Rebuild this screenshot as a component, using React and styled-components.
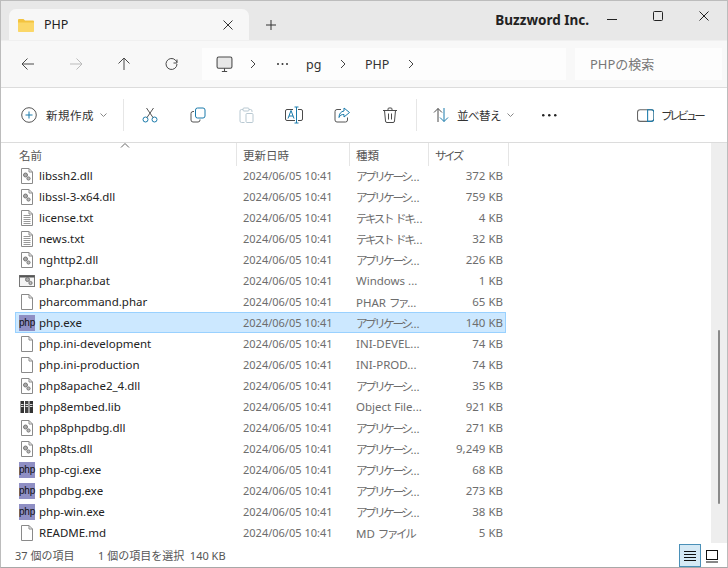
import React from 'react';
import styled, { createGlobalStyle } from 'styled-components';

const files = [
  ['libssh2.dll', 'dll', 'アプリケーシ...', '372 KB'],
  ['libssl-3-x64.dll', 'dll', 'アプリケーシ...', '759 KB'],
  ['license.txt', 'txt', 'テキスト ドキ...', '4 KB'],
  ['news.txt', 'txt', 'テキスト ドキ...', '32 KB'],
  ['nghttp2.dll', 'dll', 'アプリケーシ...', '226 KB'],
  ['phar.phar.bat', 'bat', 'Windows ...', '1 KB'],
  ['pharcommand.phar', 'blank', 'PHAR ファ...', '65 KB'],
  ['php.exe', 'php', 'アプリケーシ...', '140 KB', true],
  ['php.ini-development', 'blank', 'INI-DEVEL...', '74 KB'],
  ['php.ini-production', 'blank', 'INI-PROD...', '74 KB'],
  ['php8apache2_4.dll', 'dll', 'アプリケーシ...', '35 KB'],
  ['php8embed.lib', 'lib', 'Object File...', '921 KB'],
  ['php8phpdbg.dll', 'dll', 'アプリケーシ...', '271 KB'],
  ['php8ts.dll', 'dll', 'アプリケーシ...', '9,249 KB'],
  ['php-cgi.exe', 'php', 'アプリケーシ...', '68 KB'],
  ['phpdbg.exe', 'php', 'アプリケーシ...', '273 KB'],
  ['php-win.exe', 'php', 'アプリケーシ...', '38 KB'],
  ['README.md', 'blank', 'MD ファイル', '5 KB'],
];

// the reference font sets katakana much narrower than latin
const withKana = (text) =>
  text.split(/([\u30a0-\u30ff]+)/).map((part, i) =>
    i % 2 ? <Kana key={i}>{part}</Kana> : part
  );

const Svg = ({ size = 16, children, ...rest }) => (
  <svg width={size} height={size} viewBox="0 0 16 16" fill="none" stroke="#4a4a4a" strokeWidth="1" {...rest}>
    {children}
  </svg>
);

const Page = ({ children }) => (
  <Svg stroke="#8a8a8a">
    <path d="M2.5 .5h7.5l3.5 3.5v11.5h-11z" fill="#fff" />
    <path d="M10 .5v3.5h3.5" />
    {children}
  </Svg>
);

const Gears = () => (
  <g>
    <circle cx="6.5" cy="7" r="2" fill="#aaa" stroke="#777" />
    <circle cx="9.5" cy="10.5" r="1.6" fill="#bbb" stroke="#777" />
  </g>
);

const ThreeDots = ({ width, r, step, fill }) => (
  <svg width={width} height={r * 2} viewBox={`0 0 ${width} ${r * 2}`} fill={fill}>
    <circle cx={r} cy={r} r={r} />
    <circle cx={r + step} cy={r} r={r} />
    <circle cx={r + step * 2} cy={r} r={r} />
  </svg>
);

const FileIcon = ({ kind }) => {
  if (kind === 'php') return <PhpBadge>php</PhpBadge>;
  if (kind === 'dll') return <Page><Gears /></Page>;
  if (kind === 'blank') return <Page />;
  if (kind === 'txt') {
    return (
      <Page>
        <path d="M4.5 5.5h7M4.5 7.5h7M4.5 9.5h7M4.5 11.5h7M4.5 13.5h7" stroke="#999" />
      </Page>
    );
  }
  if (kind === 'bat') {
    return (
      <Svg stroke="#777">
        <rect x=".5" y="2.5" width="15" height="11" fill="#f4f4f4" />
        <path d="M.5 3.5h15" stroke="#555" strokeWidth="2" />
        <g transform="translate(2 -.5)"><Gears /></g>
      </Svg>
    );
  }
  return (
    <Svg stroke="none">
      <rect x="1.500" y="2" width="3.500" height="12" fill="#333" />
      <rect x="6" y="2" width="3.500" height="12" fill="#444" />
      <rect x="10.500" y="2" width="3.500" height="12" fill="#333" />
      <path d="M2 5.500h2.500M6.500 5.500h2.500M11 5.500h2.500M2 7.500h2.500M6.500 7.500h2.500M11 7.500h2.500" stroke="#ddd" />
    </Svg>
  );
};

const App = () => (
  <Window>
    <GlobalStyle />
    <TitleBar>
      <Tab>
        <svg width="16" height="14" viewBox="0 0 16 14">
          <path d="M0 2a1 1 0 0 1 1-1h4.500l1.500 1.500h8a1 1 0 0 1 1 1v9a1 1 0 0 1-1 1h-14a1 1 0 0 1-1-1z" fill="#f3c33f" />
          <path d="M0 4.500h16v8.500a1 1 0 0 1-1 1h-14a1 1 0 0 1-1-1z" fill="#fbd768" />
        </svg>
        <TabTitle>PHP</TabTitle>
        <Svg size={12} viewBox="0 0 12 12" stroke="#333"><path d="M1.500 1.500l9 9M10.500 1.500l-9 9" /></Svg>
      </Tab>
      <NewTab>
        <Svg size={12} viewBox="0 0 12 12" stroke="#333"><path d="M6 1v10M1 6h10" /></Svg>
      </NewTab>
      <Brand>Buzzword Inc.</Brand>
      <Controls>
        <ControlBox><Svg size={12} viewBox="0 0 12 12" stroke="#222"><path d="M1 9.500h10" /></Svg></ControlBox>
        <ControlBox><Svg size={12} viewBox="0 0 12 12" stroke="#222"><rect x="1.500" y="1.500" width="9" height="9" rx="1" /></Svg></ControlBox>
        <ControlBox><Svg size={12} viewBox="0 0 12 12" stroke="#222"><path d="M1.500 1.500l9 9M10.500 1.500l-9 9" /></Svg></ControlBox>
      </Controls>
    </TitleBar>

    <AddressRow>
      <NavButton><Svg><path d="M14 8H2M7.500 2.500L2 8l5.500 5.500" /></Svg></NavButton>
      <NavButton><Svg stroke="#bbb"><path d="M2 8h12M8.500 2.500L14 8l-5.500 5.500" /></Svg></NavButton>
      <NavButton><Svg><path d="M8 14V2M2.500 7.500L8 2l5.500 5.500" /></Svg></NavButton>
      <NavButton><Svg><path d="M13 3.500V7H9.500" /><path d="M13 8a5.500 5.500 0 1 1-1.600-3.900L13 6" /></Svg></NavButton>
      <AddressBox>
        <Crumb $w={44} $center>
          <Svg size={17}>
            <rect x="1" y="1" width="14" height="10.500" rx="1.500" fill="#e8e8e8" />
            <path d="M5.500 14.500h5M8 11.500v3" />
          </Svg>
        </Crumb>
        <Chevron />
        <Crumb $w={44} $center><ThreeDots width={11} r={1} step={4.500} fill="#333" /></Crumb>
        <Crumb $w={32} $pad={2}>pg</Crumb>
        <Chevron />
        <Crumb $w={54} $pad={15}>PHP</Crumb>
        <Chevron />
      </AddressBox>
      <SearchBox>PHPの検索</SearchBox>
    </AddressRow>

    <Toolbar>
      <ToolLabelButton $w={100}>
        <Svg>
          <circle cx="8" cy="8" r="7.300" stroke="#555" />
          <path d="M8 4.500v7M4.500 8h7" stroke="#1b7bab" />
        </Svg>
        <ToolLabel $spacing={0.5}>新規作成</ToolLabel>
        <SmallCaret />
      </ToolLabelButton>
      <ToolSeparator />
      <ToolButton>
        <Svg stroke="#1b7bab">
          <circle cx="3.500" cy="12.500" r="2.500" />
          <circle cx="12.500" cy="12.500" r="2.500" />
          <path d="M5 10.500L11.500 1M11 10.500L4.500 1" stroke="#555" />
        </Svg>
      </ToolButton>
      <ToolButton>
        <Svg stroke="#1b7bab">
          <rect x="5.500" y="1" width="9.500" height="10" rx="2" />
          <path d="M4 4.500h-1a2 2 0 0 0-2 2v6.500a2 2 0 0 0 2 2h5a2 2 0 0 0 2-2v-.5" stroke="#555" />
        </Svg>
      </ToolButton>
      <ToolButton>
        <Svg stroke="#b9c9d2">
          <path d="M5 2.500h-1.500a1.500 1.500 0 0 0-1.500 1.500v10a1.500 1.500 0 0 0 1.500 1.500h3" />
          <path d="M11 2.500h1.500a1.500 1.500 0 0 1 1.500 1.500v1" />
          <rect x="5" y="1" width="6" height="3" rx="1" />
          <rect x="8" y="6.500" width="7" height="9" rx="1" />
        </Svg>
      </ToolButton>
      <ToolButton>
        <Svg size={18} viewBox="0 0 18 18">
          <path d="M8 3.500h-6a1.500 1.500 0 0 0-1.500 1.500v8a1.500 1.500 0 0 0 1.500 1.500h8M13 3.500h3a1.500 1.500 0 0 1 1.500 1.500v8a1.500 1.500 0 0 1-1.500 1.500h-3" />
          <path d="M11.500 1v16M9.500 1h4M9.500 17h4" stroke="#1b7bab" />
          <path d="M3 12.500l3-8 3 8M4 10h4" stroke="#1b7bab" />
        </Svg>
      </ToolButton>
      <ToolButton>
        <Svg>
          <path d="M7 2.500h-4a2 2 0 0 0-2 2v8.500a2 2 0 0 0 2 2h8.500a2 2 0 0 0 2-2v-2.500" stroke="#555" />
          <path d="M10 1l5.500 4.500-5.500 4.500v-2.500c-2.500 0-4 .5-5 3 0-4 2-6 5-6.500z" stroke="#1b7bab" />
        </Svg>
      </ToolButton>
      <ToolButton>
        <Svg>
          <path d="M1 3.500h14M6 3.500v-1.500a1 1 0 0 1 1-1h2a1 1 0 0 1 1 1v1.500" />
          <path d="M2.500 3.500l1 10.500a1.500 1.500 0 0 0 1.500 1.500h6a1.500 1.500 0 0 0 1.500-1.500l1-10.500" />
          <path d="M6.500 6.500v6M9.500 6.500v6" />
        </Svg>
      </ToolButton>
      <ToolSeparator />
      <SortButton>
        <Svg>
          <path d="M5 15V1.500M1 5.500l4-4 4 4" />
          <path d="M11 1v13.500M7 10.500l4 4 4-4" stroke="#1b7bab" />
        </Svg>
        <ToolLabel $spacing={-0.5} $gap={8}>並べ替え</ToolLabel>
        <SmallCaret />
      </SortButton>
      <MoreButton><ThreeDots width={15} r={1.250} step={6} fill="#222" /></MoreButton>
      <PreviewButton>
        <Svg size={17}>
          <rect x=".5" y="2.500" width="15.500" height="11" rx="2.500" stroke="#666" />
          <path d="M10 2.500v11h3.500a2.500 2.500 0 0 0 2.500-2.500v-6a2.500 2.500 0 0 0-2.500-2.500z" stroke="#1b7bab" />
        </Svg>
        <PreviewLabel>プレビュー</PreviewLabel>
      </PreviewButton>
    </Toolbar>

    <Content>
      <Main>
        <HeaderRow>
          <SortMark>
            <svg width="10" height="5" viewBox="0 0 10 5" fill="none" stroke="#666"><path d="M1 4.500L5 .5l4 4" /></svg>
          </SortMark>
          <HeaderCell $w={222} $pad={4}>名前</HeaderCell>
          <HeaderCell $w={113}>更新日時</HeaderCell>
          <HeaderCell $w={79}>種類</HeaderCell>
          <HeaderCell $w={80}>{withKana('サイズ')}</HeaderCell>
        </HeaderRow>
        <List>
          <ListInner>
            {files.map(([name, kind, type, size, selected]) => (
              <Row key={name} $selected={selected}>
                <IconCell><FileIcon kind={kind} /></IconCell>
                <NameCell>{name}</NameCell>
                <DateCell>2024/06/05 10:41</DateCell>
                <TypeCell>{withKana(type)}</TypeCell>
                <SizeCell>{size}</SizeCell>
              </Row>
            ))}
          </ListInner>
        </List>
      </Main>
      <ScrollTrack>
        <ScrollThumb />
      </ScrollTrack>
    </Content>

    <StatusBar>
      <StatusText $w={83}>37 個の項目</StatusText>
      <StatusText>1 個の項目を選択&nbsp;&nbsp;140 KB</StatusText>
      <ViewButtons>
        <ViewButton $active>
          <Svg size={14} viewBox="0 0 14 14" stroke="#111"><path d="M1 2.500h12M1 5.500h12M1 8.500h12M1 11.500h12" /></Svg>
        </ViewButton>
        <ViewButton>
          <Svg size={14} viewBox="0 0 14 14" stroke="#111"><rect x="1.500" y="1.500" width="11" height="9" /><path d="M1 13h12" /></Svg>
        </ViewButton>
      </ViewButtons>
    </StatusBar>
  </Window>
);

const Chevron = () => (
  <ChevronWrap>
    <svg width="6" height="10" viewBox="0 0 6 10" fill="none" stroke="#444"><path d="M1 1l4 4-4 4" /></svg>
  </ChevronWrap>
);

const SmallCaret = () => (
  <CaretWrap>
    <svg width="7" height="4" viewBox="0 0 7 4" fill="none" stroke="#888"><path d="M.5 .5l3 3 3-3" /></svg>
  </CaretWrap>
);

const GlobalStyle = createGlobalStyle`
  html, body {
    margin: 0;
    padding: 0;
    background: #fff;
  }
  body {
    font-family: "Noto Sans", "Noto Sans CJK JP", sans-serif;
  }
`;

const Window = styled.div`
  width: 728px;
  height: 568px;
  box-sizing: border-box;
  border: 1px solid #bcbcbc;
  border-bottom-color: #a8a8a8;
  display: flex;
  flex-direction: column;
  overflow: hidden;
  background: #fff;
`;

const TitleBar = styled.div`
  height: 39px;
  flex: none;
  display: flex;
  align-items: flex-end;
  background: #e8e8e8;
  padding-left: 8px;
`;

const Tab = styled.div`
  width: 240px;
  height: 31px;
  box-sizing: border-box;
  display: flex;
  align-items: center;
  padding: 0 15px 0 9px;
  background: #f7f7f7;
  border-radius: 7px 7px 0 0;
  color: #222;
`;

const TabTitle = styled.span`
  flex: 1;
  margin-left: 10px;
  font-size: 12.500px;
`;

const NewTab = styled.div`
  width: 44px;
  height: 31px;
  display: flex;
  align-items: center;
  justify-content: center;
`;

const Brand = styled.div`
  margin-left: auto;
  align-self: flex-start;
  margin-top: 10px;
  font-size: 13.500px;
  font-weight: 700;
  color: #222;
  font-family: "Noto Sans", sans-serif;
`;

const Controls = styled.div`
  display: flex;
  align-self: flex-start;
  margin-top: 9px;
`;

const ControlBox = styled.div`
  width: 46px;
  display: flex;
  justify-content: center;
`;

const AddressRow = styled.div`
  height: 48px;
  flex: none;
  box-sizing: border-box;
  display: flex;
  align-items: center;
  padding-left: 3px;
  background: #f8f8f8;
  border-top: 1px solid #f0f0f0;
  border-bottom: 1px solid #dcdcdc;
`;

const NavButton = styled.div`
  width: 48px;
  display: flex;
  justify-content: center;
`;

const AddressBox = styled.div`
  width: 364px;
  height: 32px;
  margin-left: 6px;
  display: flex;
  align-items: center;
  box-sizing: border-box;
  background: #fdfdfd;
  font-size: 12.500px;
  color: #333;
`;

const Crumb = styled.div`
  width: ${(p) => p.$w}px;
  box-sizing: border-box;
  padding-left: ${(p) => p.$pad || 0}px;
  display: flex;
  justify-content: ${(p) => (p.$center ? 'center' : 'flex-start')};
  align-items: center;
`;

const ChevronWrap = styled.div`
  width: 14px;
  display: flex;
  justify-content: center;
`;

const SearchBox = styled.div`
  width: 147px;
  height: 32px;
  margin-left: 9px;
  box-sizing: border-box;
  padding-left: 15px;
  line-height: 32px;
  background: #fdfdfd;
  font-size: 13px;
  color: #777;
`;

const Toolbar = styled.div`
  height: 55px;
  flex: none;
  box-sizing: border-box;
  display: flex;
  align-items: center;
  padding-left: 20px;
  background: #fff;
  border-bottom: 1px solid #dcdcdc;
`;

const ToolLabelButton = styled.div`
  width: ${(p) => p.$w}px;
  flex: none;
  display: flex;
  align-items: center;
`;

const SortButton = styled.div`
  width: 96px;
  flex: none;
  margin-left: 14px;
  display: flex;
  align-items: center;
`;

const ToolLabel = styled.span`
  margin-left: ${(p) => p.$gap || 9}px;
  font-size: 11.500px;
  color: #333;
  white-space: nowrap;
  letter-spacing: ${(p) => p.$spacing || 0}px;
`;

const PreviewLabel = styled.span`
  margin-left: 7px;
  font-size: 11.500px;
  color: #333;
  white-space: nowrap;
  letter-spacing: -3.200px;
`;

const CaretWrap = styled.span`
  display: flex;
  margin-left: 6px;
`;

const ToolSeparator = styled.div`
  width: 1px;
  height: 32px;
  flex: none;
  margin: 0 2px;
  background: #e6e6e6;
`;

const ToolButton = styled.div`
  width: 48px;
  flex: none;
  display: flex;
  justify-content: center;
`;

const MoreButton = styled.div`
  width: 40px;
  flex: none;
  display: flex;
  justify-content: center;
  padding-top: 1px;
`;

const PreviewButton = styled.div`
  margin-left: 68px;
  display: flex;
  align-items: center;
`;

const Content = styled.div`
  flex: 1;
  min-height: 0;
  display: flex;
`;

const Main = styled.div`
  flex: 1;
  min-width: 0;
  display: flex;
  flex-direction: column;
`;

const HeaderRow = styled.div`
  position: relative;
  height: 23px;
  flex: none;
  display: flex;
  padding-left: 14px;
`;

const SortMark = styled.div`
  position: absolute;
  left: 119px;
  top: -1px;
  line-height: 0;
`;

const HeaderCell = styled.div`
  width: ${(p) => p.$w}px;
  box-sizing: border-box;
  padding-left: ${(p) => p.$pad || 6}px;
  padding-top: 4px;
  border-right: 1px solid #e5e5e5;
  font-size: 11.500px;
  color: #555;
`;

const Kana = styled.span`
  letter-spacing: -2.400px;
`;

const List = styled.div`
  flex: 1;
  min-height: 0;
  overflow: hidden;
`;

const ListInner = styled.div`
  margin-top: -1px;
`;

const Row = styled.div`
  width: 491px;
  height: 21px;
  margin-left: 14px;
  box-sizing: border-box;
  display: grid;
  grid-template-columns: 20px 204px 113px 74px 72px;
  align-items: center;
  padding-left: 4px;
  border: 1px solid ${(p) => (p.$selected ? '#99d1ff' : 'transparent')};
  background: ${(p) => (p.$selected ? '#cce8ff' : 'transparent')};
  font-size: 11.500px;
`;

const IconCell = styled.div`
  margin-left: -1px;
  height: 16px;
  display: flex;
  line-height: 0;
`;

const PhpBadge = styled.span`
  width: 16px;
  height: 16px;
  background: #8f8fc4;
  color: #111;
  font: 400 10px/15px "Liberation Sans", sans-serif;
  text-align: center;
  letter-spacing: -0.2px;
`;

const NameCell = styled.div`
  margin-left: -1px;
  color: #222;
  white-space: nowrap;
`;

const DateCell = styled.div`
  margin-left: -1px;
  font-size: 11px;
  color: #6d6d6d;
  white-space: nowrap;
`;

const TypeCell = styled.div`
  margin-left: -1px;
  color: #6d6d6d;
  white-space: nowrap;
`;

const SizeCell = styled.div`
  color: #6d6d6d;
  text-align: right;
  white-space: nowrap;
`;

const ScrollTrack = styled.div`
  width: 16px;
  flex: none;
  background: #eeeeee;
  position: relative;
`;

const ScrollThumb = styled.div`
  position: absolute;
  right: 7px;
  top: 187px;
  width: 2px;
  height: 174px;
  background: #8a8a8a;
  border-radius: 1px;
`;

const StatusBar = styled.div`
  height: 24px;
  flex: none;
  display: flex;
  align-items: center;
  padding-left: 14px;
  font-size: 11px;
  color: #555;
`;

const StatusText = styled.div`
  ${(p) => (p.$w ? `width: ${p.$w}px;` : '')}
  white-space: nowrap;
`;

const ViewButtons = styled.div`
  margin-left: auto;
  display: flex;
  height: 100%;
  align-items: flex-end;
  padding-right: 4px;
`;

const ViewButton = styled.div`
  width: 22px;
  height: 23px;
  box-sizing: border-box;
  display: flex;
  align-items: center;
  justify-content: center;
  border: 1px solid ${(p) => (p.$active ? '#4a90b8' : 'transparent')};
  background: ${(p) => (p.$active ? '#d5e9f5' : 'transparent')};
`;

export default App;
